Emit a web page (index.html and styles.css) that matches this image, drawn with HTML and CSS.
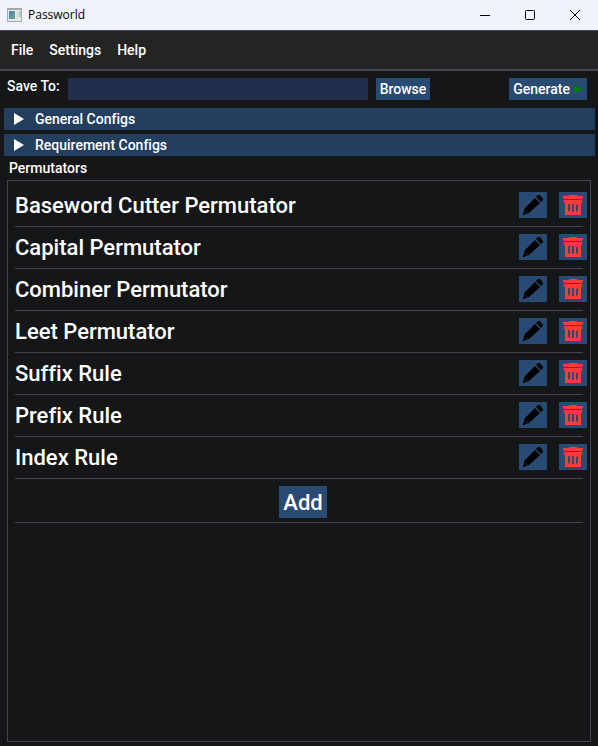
FILE: index.html
```html
<!DOCTYPE html>
<html lang="en">
<head>
<meta charset="utf-8">
<title>Passworld</title>
<link rel="stylesheet" href="styles.css">
</head>
<body>
<svg class="defs" aria-hidden="true">
  <symbol id="pencil" viewBox="0 0 28 26">
    <path d="M4 22v-1l1-1v-3L16 6l5 5L10 21l-3 1-2 1H4z"/>
    <path d="M17 5l2-2h2l3 4v1l-2 2z"/>
    <path class="pencil-line" d="M16.500 5.500l5 5M5.500 17.500l4 4"/>
  </symbol>
  <symbol id="trash" viewBox="0 0 28 26">
    <path d="M10 3h8v1h6v2h-1v1H5V6H4V4h6z"/>
    <path fill-rule="evenodd" d="M6 8h16v-.5h1V11h-1v12H6V11H5V8zM9 12v7h1v1h1v-8zM13 12v8h2v-8zM18 12v1h-1v7h1v-1h1v-7z"/>
  </symbol>
</svg>
<div class="window">
  <header class="titlebar">
    <svg class="app-icon" viewBox="0 0 15 14" aria-hidden="true">
      <defs><linearGradient id="g" x1="0" y1="0" x2="1" y2="1"><stop offset="0" stop-color="#4d82b4"/><stop offset="1" stop-color="#5cb08b"/></linearGradient></defs>
      <rect width="15" height="14" fill="#a5a9ab"/>
      <rect x="1" y="2" width="13" height="11" fill="#e9ebeb"/>
      <rect x="2" y="3" width="6" height="8" fill="url(#g)"/>
      <rect x="9" y="3" width="3" height="8" fill="#dcdedc"/>
      <rect x="12" y="3" width="2" height="6" fill="#a9cfc0"/>
    </svg>
    <span class="title">Passworld</span>
    <div class="window-buttons">
      <button aria-label="Minimize"><svg viewBox="0 0 12 12"><path d="M1 6.500h10"/></svg></button>
      <button aria-label="Maximize"><svg viewBox="0 0 12 12"><rect x="1.500" y="1.500" width="9" height="9" rx="1"/></svg></button>
      <button aria-label="Close"><svg viewBox="0 0 12 12"><path d="M1 1l10 10M11 1L1 11"/></svg></button>
    </div>
  </header>
  <nav class="menubar">
    <button>File</button>
    <button>Settings</button>
    <button>Help</button>
  </nav>
  <main>
    <div class="toolbar">
      <label for="save">Save To:</label>
      <input id="save" type="text">
      <button class="btn">Browse</button>
      <button class="btn generate">Generate <svg viewBox="0 0 9 8" aria-hidden="true"><path d="M0 0l9 4-9 4z"/></svg></button>
    </div>
    <button class="collapse"><svg viewBox="0 0 10 12" aria-hidden="true"><path d="M0 0l10 6-10 6z"/></svg>General Configs</button>
    <button class="collapse"><svg viewBox="0 0 10 12" aria-hidden="true"><path d="M0 0l10 6-10 6z"/></svg>Requirement Configs</button>
    <h2>Permutators</h2>
    <section class="panel">
      <ul>
        <li><span>Baseword Cutter Permutator</span><button class="icon edit" aria-label="Edit"><svg><use href="#pencil"/></svg></button><button class="icon delete" aria-label="Delete"><svg><use href="#trash"/></svg></button></li>
        <li><span>Capital Permutator</span><button class="icon edit" aria-label="Edit"><svg><use href="#pencil"/></svg></button><button class="icon delete" aria-label="Delete"><svg><use href="#trash"/></svg></button></li>
        <li><span>Combiner Permutator</span><button class="icon edit" aria-label="Edit"><svg><use href="#pencil"/></svg></button><button class="icon delete" aria-label="Delete"><svg><use href="#trash"/></svg></button></li>
        <li><span>Leet Permutator</span><button class="icon edit" aria-label="Edit"><svg><use href="#pencil"/></svg></button><button class="icon delete" aria-label="Delete"><svg><use href="#trash"/></svg></button></li>
        <li><span>Suffix Rule</span><button class="icon edit" aria-label="Edit"><svg><use href="#pencil"/></svg></button><button class="icon delete" aria-label="Delete"><svg><use href="#trash"/></svg></button></li>
        <li><span>Prefix Rule</span><button class="icon edit" aria-label="Edit"><svg><use href="#pencil"/></svg></button><button class="icon delete" aria-label="Delete"><svg><use href="#trash"/></svg></button></li>
        <li><span>Index Rule</span><button class="icon edit" aria-label="Edit"><svg><use href="#pencil"/></svg></button><button class="icon delete" aria-label="Delete"><svg><use href="#trash"/></svg></button></li>
      </ul>
      <div class="add-row"><button class="add">Add</button></div>
    </section>
  </main>
</div>
</body>
</html>
```

FILE: styles.css
```css
* { box-sizing: border-box; }

body {
  margin: 0;
  background: #151618;
  color: #fff;
  font: 500 14px/16px Roboto, sans-serif;
  font-variant-ligatures: none;
}

button {
  margin: 0;
  padding: 0;
  border: 0;
  background: none;
  color: inherit;
  font: inherit;
}

.defs { position: absolute; width: 0; height: 0; }

.window {
  display: flex;
  flex-direction: column;
  min-height: 100vh;
}

.titlebar {
  display: flex;
  align-items: center;
  height: 30px;
  padding: 0 1px 0 7px;
  background: #f0f3fb;
  color: #000;
}

.app-icon { width: 15px; height: 14px; }

.title {
  margin-left: 6px;
  font: 400 12px/16px "Open Sans", sans-serif;
}

.window-buttons { display: flex; margin-left: auto; }

.window-buttons button {
  display: grid;
  place-items: center;
  width: 45px;
  height: 28px;
}

.window-buttons svg {
  width: 12px;
  height: 12px;
  fill: none;
  stroke: #000;
}

.menubar {
  display: flex;
  align-items: center;
  gap: 16px;
  height: 41px;
  padding-left: 11px;
  background: #242424;
  border-top: 1px solid #43444c;
  border-bottom: 2px solid #43444c;
}

main {
  display: flex;
  flex: 1;
  flex-direction: column;
  padding: 7px 3px 4px 4px;
}

.toolbar {
  display: flex;
  gap: 8px;
  height: 22px;
  margin-bottom: 8px;
  padding: 0 8px 0 3px;
}

#save {
  flex: 0 1 300px;
  min-width: 0;
  padding: 0 4px;
  border: 0;
  background: #20304c;
  color: inherit;
  font: inherit;
}

.btn {
  padding: 0 4px;
  background: #284a73;
}

.generate {
  display: flex;
  align-items: center;
  gap: 4px;
  margin-left: auto;
}

.generate svg { width: 9px; height: 8px; fill: #008000; }

.collapse {
  display: flex;
  align-items: center;
  gap: 11px;
  height: 22px;
  margin-bottom: 4px;
  padding-left: 10px;
  background: #243e5d;
}

.collapse svg { width: 10px; height: 12px; fill: #fff; }

h2 {
  margin: 0 0 4px 5px;
  font: inherit;
}

.panel {
  flex: 1;
  margin: 0 4px 0 3px;
  padding: 4px 7px;
  border: 1px solid #43444c;
}

ul { margin: 0; padding: 0; list-style: none; }

li {
  display: flex;
  align-items: flex-start;
  gap: 12px;
  padding: 7px 0 6px;
  border-bottom: 1px solid #43444c;
  font-size: 22px;
  line-height: 28px;
}

li span { flex: 1; }

.icon {
  width: 28px;
  height: 26px;
  background: #284a73;
}

.icon svg {
  display: block;
  width: 28px;
  height: 26px;
}

.edit { fill: #000; }

.pencil-line {
  stroke: #284a73;
  stroke-width: 1;
  stroke-dasharray: 1 1;
}

.delete { margin-right: -4px; fill: #ff3a3a; }

.add-row {
  display: flex;
  justify-content: center;
  padding: 7px 0 4px 8px;
  border-bottom: 1px solid #43444c;
}

.add {
  padding: 4px 4px 2px;
  background: #284a73;
  font-size: 22px;
  line-height: 26px;
}
```
